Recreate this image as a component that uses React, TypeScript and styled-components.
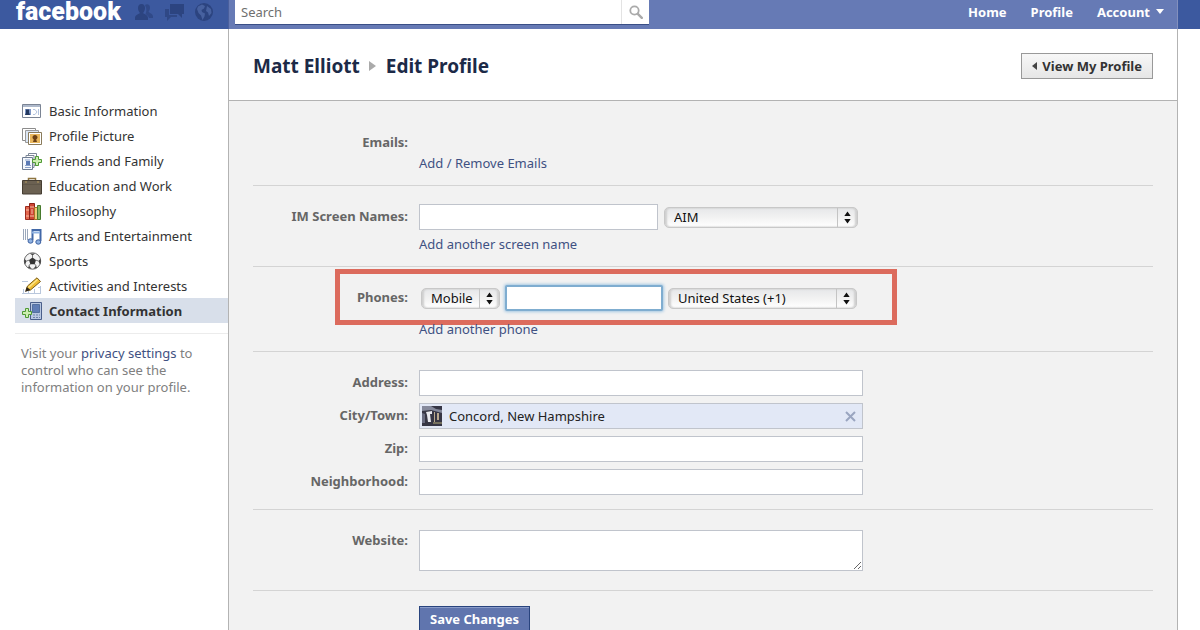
import React from "react";
import styled, { createGlobalStyle, css } from "styled-components";

const GlobalStyle = createGlobalStyle`
  *, *::before, *::after { box-sizing: border-box; }
  html, body { margin: 0; background: #fff; }
  body {
    font-family: "Lucida Grande", "Noto Sans", "Open Sans", sans-serif;
    font-size: 13px;
    line-height: 18px;
    color: #333;
  }
  a { color: #3f5182; text-decoration: none; }
  a:hover { text-decoration: underline; }
  button, input, select, textarea { font: inherit; color: inherit; margin: 0; }
`;

const Page = styled.div`
  display: flex;
  flex-direction: column;
  min-height: 100vh;
`;

/* ---------- Top bar ---------- */

const TopBar = styled.header`
  display: flex;
  height: 29px;
  padding-right: 22px;
  background: #3c599f;
`;

const Brand = styled.div`
  flex: 0 0 228px;
  display: flex;
  align-items: center;
  gap: 13px;
  padding: 0 0 5px 16px;
`;

const Logo = styled.a`
  color: #fff;
  font-family: Roboto, sans-serif;
  font-size: 25px;
  font-weight: 900;
  line-height: 24px;
`;

const Jewels = styled.div`
  display: flex;
  gap: 10px;
`;

const JewelButton = styled.button`
  display: flex;
  padding: 0;
  border: 0;
  background: none;
`;

const TopContent = styled.div`
  flex: 1;
  display: flex;
  justify-content: space-between;
  padding: 0 13px 4px 6px;
  border-left: 1px solid #4a5f9c;
  border-right: 1px solid #8390bd;
  background: #667ab5;
`;

const SearchForm = styled.form`
  display: flex;
  width: 414px;
  border-bottom: 1px solid #3a4f86;
  background: #fff;
`;

const SearchInput = styled.input`
  flex: 1;
  min-width: 0;
  padding: 0 6px;
  border: 0;
  outline: 0;
  background: none;
  &::placeholder { color: #6f6f6f; opacity: 1; }
`;

const SearchButton = styled.button`
  display: flex;
  align-items: center;
  justify-content: center;
  width: 28px;
  padding: 0;
  border: 0;
  border-left: 1px solid #e3e3e3;
  background: none;
`;

const TopNav = styled.nav`
  display: flex;
  align-items: center;
  gap: 24px;
  padding-bottom: 2px;
  a {
    display: flex;
    align-items: center;
    gap: 6px;
    color: #fff;
    font-weight: 700;
  }
`;

/* ---------- Columns ---------- */

const Columns = styled.div`
  flex: 1;
  display: flex;
  padding-right: 22px;
`;

const Sidebar = styled.aside`
  flex: 0 0 228px;
  padding: 69px 0 0 15px;
`;

const MenuList = styled.ul`
  margin: 0;
  padding: 0 0 10px;
  border-bottom: 1px solid #ececec;
  list-style: none;
`;

const MenuLink = styled.a<{ $active?: boolean }>`
  display: flex;
  align-items: center;
  gap: 7px;
  height: 25px;
  padding-left: 7px;
  color: #333;
  ${(p) => p.$active && css`
    background: #d8dfea;
    font-weight: 700;
  `}
`;

const Note = styled.p`
  margin: 11px 20px 0 6px;
  color: #808080;
  line-height: 17px;
`;

const Main = styled.main`
  flex: 1;
  border-left: 1px solid #b3b3b3;
  border-right: 1px solid #b3b3b3;
  background: #f2f2f2;
`;

const TitleBar = styled.div`
  display: flex;
  align-items: center;
  justify-content: space-between;
  height: 72px;
  padding: 2px 24px 0;
  border-bottom: 1px solid #b3b3b3;
  background: #fff;
`;

const Title = styled.h1`
  display: flex;
  align-items: center;
  gap: 9px;
  margin: 0;
  color: #1c2a47;
  font-size: 19px;
  line-height: 24px;
`;

const ViewButton = styled.button`
  display: flex;
  align-items: center;
  gap: 5px;
  height: 26px;
  padding: 0 10px;
  border: 1px solid #999;
  background: linear-gradient(#f7f7f7, #e6e6e6);
  color: #333;
  font-weight: 700;
`;

/* ---------- Form ---------- */

const Form = styled.form`
  padding: 0 24px;
`;

const Section = styled.section<{ $top?: number; $gap?: number; $bottom?: number }>`
  display: flex;
  flex-direction: column;
  gap: ${(p) => p.$gap ?? 5}px;
  padding: ${(p) => p.$top ?? 18}px 0 ${(p) => p.$bottom ?? 13}px;
  border-bottom: 1px solid #d4d4d4;
`;

const Row = styled.div`
  position: relative;
  display: grid;
  grid-template-columns: 155px minmax(0, 1fr);
  column-gap: 11px;
`;

const Label = styled.label<{ $top?: number }>`
  padding-top: ${(p) => p.$top ?? 3}px;
  color: #666;
  font-weight: 700;
  text-align: right;
`;

const PlainLabel = styled.span`
  color: #666;
  font-weight: 700;
  text-align: right;
`;

const Controls = styled.div<{ $gap: number; $inset?: number }>`
  display: flex;
  align-items: center;
  gap: ${(p) => p.$gap}px;
  padding-left: ${(p) => p.$inset ?? 0}px;
`;

const AddLink = styled.a`
  position: relative;
  z-index: 1;
  align-self: flex-start;
  margin-left: 166px;
`;

const fieldBox = css`
  border: 1px solid #c0c4cc;
  border-radius: 0;
  background: #fff;
`;

const TextField = styled.input<{ $width?: number }>`
  ${fieldBox}
  width: ${(p) => p.$width ?? 444}px;
  height: 26px;
  padding: 0 6px;
  outline: 0;
`;

const PhoneField = styled(TextField)`
  border: 2px solid #7fadd0;
  border-radius: 2px;
  box-shadow: 0 0 3px 1px #a5c8e2;
`;

const Website = styled.textarea`
  ${fieldBox}
  width: 444px;
  height: 41px;
  padding: 4px 6px;
  outline: 0;
`;

const Token = styled.div`
  ${fieldBox}
  display: flex;
  align-items: center;
  width: 444px;
  height: 26px;
  padding: 0 6px 0 2px;
  background: #e2e8f6;
`;

const TokenInput = styled.input`
  flex: 1;
  min-width: 0;
  padding: 0 7px;
  border: 0;
  outline: 0;
  background: none;
  color: #222;
`;

const ClearButton = styled.button`
  display: flex;
  padding: 0;
  border: 0;
  background: none;
`;

const SelectWrap = styled.span<{ $width: number }>`
  position: relative;
  display: block;
  width: ${(p) => p.$width}px;
  height: 21px;
  svg {
    position: absolute;
    top: 0;
    right: 0;
    pointer-events: none;
  }
`;

const SelectBox = styled.select`
  appearance: none;
  display: block;
  width: 100%;
  height: 21px;
  padding: 0 22px 0 9px;
  border: 1px solid #c8c8c8;
  border-radius: 5px;
  outline: 0;
  background: linear-gradient(#e6e7e9, #f2f2f2 50%, #fff);
  box-shadow: inset 2px 0 2px #cfcfcf, inset -2px 0 2px #cfcfcf;
  color: #111;
  line-height: 18px;
`;

const Callout = styled.div`
  position: absolute;
  top: -16px;
  bottom: -14px;
  left: 82px;
  width: 562px;
  border: 5px solid #dc6b5d;
  pointer-events: none;
`;

const Fields = styled.div`
  display: flex;
  flex-direction: column;
  gap: 7px;
`;

const Actions = styled.div`
  padding: 15px 0 20px 166px;
`;

const SaveButton = styled.button`
  height: 26px;
  padding: 0 10px;
  border: 1px solid #29447e;
  background: #6075ae;
  box-shadow: inset 0 1px 0 #8a9cc9;
  color: #fff;
  font-weight: 700;
`;

/* ---------- Icons ---------- */

const FriendsIcon = () => (
  <svg width="20" height="20" viewBox="0 0 20 20" fill="#2c4480">
    <path d="M11 3c2-1.500 5-.5 5 2.500 0 2-.8 3-1.400 4 .2 1.500 4.400 2 4.400 5V16h-4c-.5-2-2-3-3.500-4 1.200-2 1.500-5-.5-9z" opacity=".75" />
    <path d="M7.500 2C10 2 11 3.700 11 6c0 1.800-.7 3.300-1.600 4.200v1.300c1.500.8 4.600 1.500 4.600 4.500v2H1v-2c0-3 3-3.700 4.600-4.500v-1.300C4.700 9.300 4 7.800 4 6c0-2.300 1-4 3.500-4z" />
  </svg>
);

const MessagesIcon = () => (
  <svg width="20" height="20" viewBox="0 0 20 20" fill="#2c4480">
    <path d="M6 2h14v10h-2v4l-4-4H6z" />
    <path d="M1 7h4v6h8v2H7l-4 4v-4H1z" opacity=".8" />
  </svg>
);

const GlobeIcon = () => (
  <svg width="20" height="20" viewBox="0 0 20 20">
    <circle cx="10" cy="10" r="9" fill="#2c4480" />
    <path d="M4 4.500 8 2.500l3 1.500-1 2.500-2.500 1.500L8 10l3 1.500-.5 3L8.500 18 7 13.500 4.500 11 3 7zM13 4l4 3 .5 4-2.500 3-1-3.500-2-1.500z" fill="#47619f" />
  </svg>
);

const SearchIcon = () => (
  <svg width="14" height="14" viewBox="0 0 14 14" fill="none" stroke="#aaa">
    <circle cx="5.500" cy="5.500" r="4.200" strokeWidth="1.800" />
    <path d="m8.800 8.800 4 4" strokeWidth="2.400" strokeLinecap="round" />
  </svg>
);

const Plus = ({ x, y }: { x: number; y: number }) => (
  <path
    transform={`translate(${x} ${y})`}
    d="M3.500.5h3v3h3v3h-3v3h-3v-3h-3v-3h3z"
    fill="#cdeeb0"
    stroke="#4f9a35"
  />
);

const menuIcons: Record<string, React.ReactNode> = {
  card: (
    <>
      <path d="M.5 2.500h18v13H.5z" fill="#fff" stroke="#7b8494" />
      <path d="M1 3h17v2H1z" fill="#aeb9cb" />
      <path d="M3 7h6v6H3z" fill="#7f97c6" />
      <path d="M4 7.500h3v3l1 2.500H3l1-2z" fill="#23385f" />
      <path d="M11 7.500h2l2 2.500-2 2.500h-2M16.500 7v6" fill="none" stroke="#b4c4df" />
    </>
  ),
  picture: (
    <>
      <path d="M.5 1.500h13v12H.5z" fill="#fff" stroke="#8c8c8c" />
      <path d="M3.500 3.500h13v12h-13z" fill="#dbe6f5" stroke="#9a9a9a" />
      <path d="M6.500 5.500h13v12h-13z" fill="#fff" stroke="#8a7b5b" />
      <path d="M8 7h10v9H8z" fill="#e8b65c" />
      <path d="M13 8c1.500 0 2.500 1 2.500 2.300 0 1-.6 1.800-1.300 2.100L15 15h-4l.8-2.600c-.8-.4-1.300-1.200-1.300-2.100C10.500 9 11.500 8 13 8z" fill="#6b4015" />
    </>
  ),
  family: (
    <>
      <path d="M6.500 1.500h8v12h-8z" fill="#fff" stroke="#7d8797" />
      <path d="M4 3.500h8v12H4z" fill="#fff" stroke="#7d8797" />
      <path d="M.5 5.500h10v12H.5z" fill="#f5f8fc" stroke="#6f7c92" />
      <path d="M3 8h5M3 13.500h6M3 15.500h6" stroke="#8aa0c8" />
      <path d="M4 9h4v4H4z" fill="#5a79b4" />
      <Plus x={10} y={4} />
    </>
  ),
  briefcase: (
    <>
      <path d="M6.500 4V1.500h7V4" fill="none" stroke="#8d7440" strokeWidth="1.500" />
      <path d="M.5 3.500h19v13.500H.5z" fill="#6b6152" stroke="#453d32" />
      <path d="M1 7.500h18" stroke="#5f5648" />
      <path d="M4 4v2M16 4v2" stroke="#b59a5c" />
    </>
  ),
  books: (
    <>
      <path d="M3.500 4.500h4v13h-4z" fill="#e2664d" stroke="#9c2b1e" />
      <path d="M7.500 1.500h5v16h-5z" fill="#cf4634" stroke="#8d2318" />
      <path d="M4 8h3M4 14h3M8 5h4M8 14h4" stroke="#f6bfa8" />
      <path d="M12.500 5.500h3v12h-3z" fill="#f0c878" stroke="#a87325" />
      <path d="M15.500 3.500h3v14h-3z" fill="#86b865" stroke="#477a2d" />
      <path d="M10 7v5" stroke="#f6bfa8" />
    </>
  ),
  music: (
    <>
      <path d="M1.500 2v11M3.500 2v11M5.500 2v11" stroke="#9ba8bc" />
      <path d="M10.500 13V3h8v11" fill="none" stroke="#4268a8" strokeWidth="2" />
      <path d="M10 5.500h8" stroke="#8fb2e2" strokeWidth="2" />
      <ellipse cx="8.500" cy="14" rx="2.500" ry="2.200" fill="#8fb2e2" stroke="#3c60a0" />
      <ellipse cx="16.300" cy="15" rx="2.500" ry="2.200" fill="#8fb2e2" stroke="#3c60a0" />
    </>
  ),
  ball: (
    <>
      <circle cx="10.500" cy="9" r="8.200" fill="#f4f4f4" stroke="#666" />
      <path d="m10.500 5.500 3.500 2.600-1.300 4.100H8.300L7 8.100z" fill="#333" />
      <path d="M8 1.500h5l-2.500 2zM2.500 7l2.200 2L3 12.500C2 11 2 8.500 2.500 7zM18.500 7l-2.200 2 1.700 3.500c1-1.500 1-4 .5-5.500zM6 16l1-2.500 2.500 3.300zM15 16l-1-2.500-2.500 3.300z" fill="#444" />
      <path d="M10.500 3v3M4.500 9 7 8.200M16.500 9 14 8.200M8.300 12l-1.500 2M12.700 12l1.500 2" stroke="#777" />
    </>
  ),
  pencil: (
    <>
      <path d="M0 4.500h6M0 16.500h19M1.500 12v5M6.500 14v3M12.500 12v5M18.500 9v8M16 10.500h3" stroke="#b9c7dc" />
      <path d="M4 13.500 5.500 9 15 .8 18.500 4.500 8.500 13z" fill="#eebd35" stroke="#7d5f1a" />
      <path d="m6.500 10.500 9-8" stroke="#fbe58c" strokeWidth="1.500" />
      <path d="m3 15 1.800-5L8.500 13z" fill="#2f2619" />
    </>
  ),
  contact: (
    <>
      <path d="M8.500.5h11v17h-11z" fill="#b9c8e2" stroke="#4a5f8a" />
      <path d="M10.500 2.500h7v8h-7z" fill="#5f7db5" stroke="#54709f" />
      <path d="M11 13h2M14 13h2M17 13h1M11 15.500h2M14 15.500h2M17 15.500h1" stroke="#6f83a8" />
      <Plus x={0} y={6} />
    </>
  ),
};

const MenuIcon = ({ name }: { name: string }) => (
  <svg width="20" height="18" viewBox="0 0 20 18">{menuIcons[name]}</svg>
);

const Thumbnail = () => (
  <svg width="20" height="20" viewBox="0 0 20 20">
    <path d="M0 0h20v20H0z" fill="#363645" />
    <path d="M0 0h9l5 3 6 1v3L9 4 0 5z" fill="#85899b" />
    <path d="M4 6l6-1v3H8l1 8H6L5 9z" fill="#e8e9ef" />
    <path d="M12 6h1v10h-1zM15 7h2v7h-2z" fill="#b9a88d" />
    <path d="M0 7l3 1v9H0z" fill="#686b80" />
    <path d="M11 16h9v2h-9z" fill="#74705e" />
  </svg>
);

const Stepper = () => (
  <svg width="21" height="21" viewBox="0 0 21 21">
    <path d="M.5 1v19" stroke="#c4c4c4" />
    <path d="m10.500 4.500 3.200 4.500H7.300zM10.500 16.500 7.300 12h6.400z" fill="#111" />
  </svg>
);

const PopUp = ({ id, label, width, value }: { id: string; label: string; width: number; value: string }) => (
  <SelectWrap $width={width}>
    <SelectBox id={id} aria-label={label} defaultValue={value}>
      <option>{value}</option>
    </SelectBox>
    <Stepper />
  </SelectWrap>
);

/* ---------- Page ---------- */

const menu = [
  ["card", "Basic Information"],
  ["picture", "Profile Picture"],
  ["family", "Friends and Family"],
  ["briefcase", "Education and Work"],
  ["books", "Philosophy"],
  ["music", "Arts and Entertainment"],
  ["ball", "Sports"],
  ["pencil", "Activities and Interests"],
  ["contact", "Contact Information"],
];

export default function App() {
  return (
    <Page>
      <GlobalStyle />
      <TopBar>
        <Brand>
          <Logo href="#">facebook</Logo>
          <Jewels>
            <JewelButton aria-label="Friend requests"><FriendsIcon /></JewelButton>
            <JewelButton aria-label="Messages"><MessagesIcon /></JewelButton>
            <JewelButton aria-label="Notifications"><GlobeIcon /></JewelButton>
          </Jewels>
        </Brand>
        <TopContent>
          <SearchForm role="search">
            <SearchInput aria-label="Search" placeholder="Search" />
            <SearchButton type="button" aria-label="Search"><SearchIcon /></SearchButton>
          </SearchForm>
          <TopNav>
            <a href="#">Home</a>
            <a href="#">Profile</a>
            <a href="#">
              Account
              <svg width="8" height="5" viewBox="0 0 8 5"><path d="M0 0h8L4 5z" fill="#fff" /></svg>
            </a>
          </TopNav>
        </TopContent>
      </TopBar>
      <Columns>
        <Sidebar>
          <MenuList>
            {menu.map(([icon, text]) => (
              <li key={icon}>
                <MenuLink href="#" $active={icon === "contact"}>
                  <MenuIcon name={icon} />
                  {text}
                </MenuLink>
              </li>
            ))}
          </MenuList>
          <Note>
            Visit your <a href="#">privacy settings</a> to control who can see the information on your profile.
          </Note>
        </Sidebar>
        <Main>
          <TitleBar>
            <Title>
              Matt Elliott
              <svg width="8" height="10" viewBox="0 0 8 10"><path d="M0 0v10l7-5z" fill="#aaa" /></svg>
              Edit Profile
            </Title>
            <ViewButton type="button">
              <svg width="5" height="8" viewBox="0 0 5 8"><path d="M5 0v8L0 4z" fill="#444" /></svg>
              View My Profile
            </ViewButton>
          </TitleBar>
          <Form>
            <Section $top={32} $gap={3}>
              <Row><PlainLabel>Emails:</PlainLabel></Row>
              <AddLink href="#">Add / Remove Emails</AddLink>
            </Section>
            <Section>
              <Row>
                <Label htmlFor="im">IM Screen Names:</Label>
                <Controls $gap={6}>
                  <TextField id="im" $width={239} />
                  <PopUp id="im-service" label="Service" width={194} value="AIM" />
                </Controls>
              </Row>
              <AddLink href="#">Add another screen name</AddLink>
            </Section>
            <Section $gap={9}>
              <Row>
                <Label htmlFor="phone">Phones:</Label>
                <Controls $gap={5} $inset={2}>
                  <PopUp id="phone-type" label="Phone type" width={79} value="Mobile" />
                  <PhoneField id="phone" $width={158} />
                  <PopUp id="phone-country" label="Country" width={189} value="United States (+1)" />
                </Controls>
                <Callout />
              </Row>
              <AddLink href="#">Add another phone</AddLink>
            </Section>
            <Section $bottom={14}>
              <Fields>
                <Row>
                  <Label htmlFor="address">Address:</Label>
                  <TextField id="address" />
                </Row>
                <Row>
                  <Label htmlFor="city">City/Town:</Label>
                  <Token>
                    <Thumbnail />
                    <TokenInput id="city" defaultValue="Concord, New Hampshire" />
                    <ClearButton type="button" aria-label="Clear city">
                      <svg width="11" height="11" viewBox="0 0 11 11" stroke="#9aa5c0" strokeWidth="2">
                        <path d="m1 1 9 9M10 1l-9 9" />
                      </svg>
                    </ClearButton>
                  </Token>
                </Row>
                <Row>
                  <Label htmlFor="zip">Zip:</Label>
                  <TextField id="zip" />
                </Row>
                <Row>
                  <Label htmlFor="neighborhood">Neighborhood:</Label>
                  <TextField id="neighborhood" />
                </Row>
              </Fields>
            </Section>
            <Section $top={20} $bottom={19}>
              <Row>
                <Label htmlFor="website" $top={1}>Website:</Label>
                <Website id="website" />
              </Row>
            </Section>
            <Actions>
              <SaveButton type="button">Save Changes</SaveButton>
            </Actions>
          </Form>
        </Main>
      </Columns>
    </Page>
  );
}
